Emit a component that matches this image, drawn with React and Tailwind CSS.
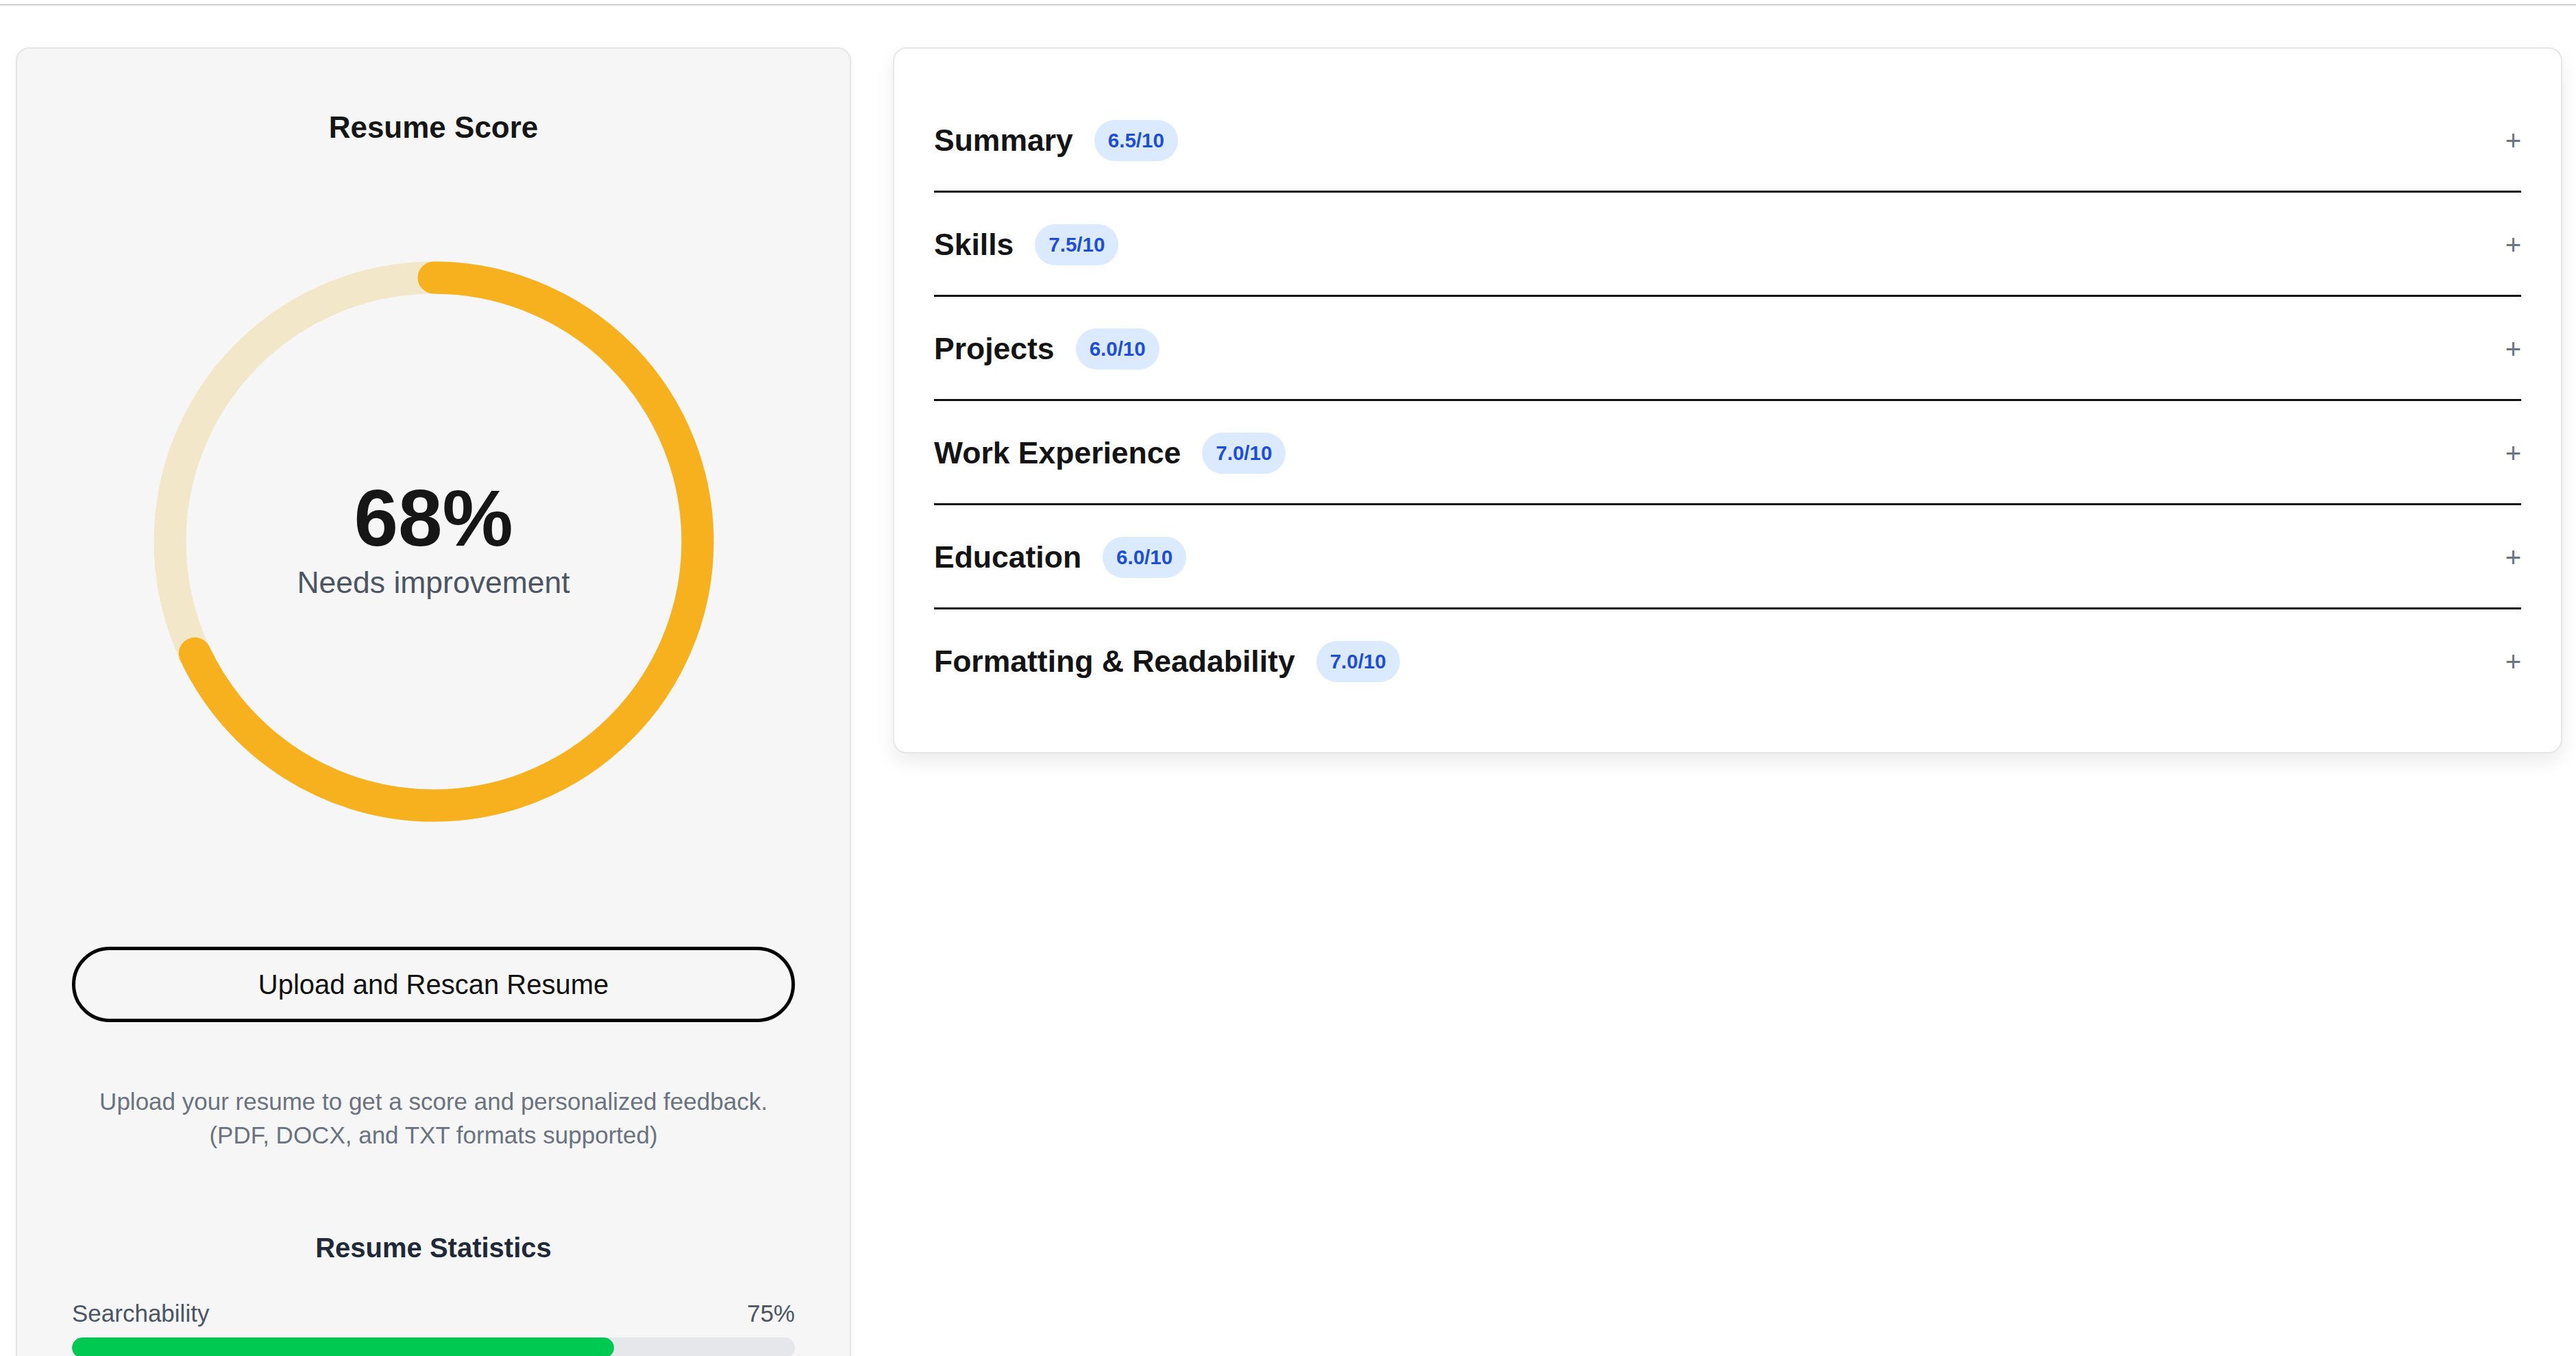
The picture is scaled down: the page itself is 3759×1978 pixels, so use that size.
import React from "react";

const sections = [
  { name: "Summary", score: "6.5/10" },
  { name: "Skills", score: "7.5/10" },
  { name: "Projects", score: "6.0/10" },
  { name: "Work Experience", score: "7.0/10" },
  { name: "Education", score: "6.0/10" },
  { name: "Formatting & Readability", score: "7.0/10" },
];

const ScoreRing = ({ value }) => {
  const r = 385;
  const circ = 2 * Math.PI * r;
  const filled = (value / 100) * circ;

  return (
    <div className="relative w-[818px] h-[818px] mx-auto mt-[162px]">
      <svg width="818" height="818" viewBox="0 0 818 818" className="-rotate-90">
        <circle cx="409" cy="409" r={r} fill="none" stroke="#f3e7c9" strokeWidth="47" />
        <circle
          cx="409"
          cy="409"
          r={r}
          fill="none"
          stroke="#f7b11e"
          strokeWidth="47"
          strokeLinecap="round"
          strokeDasharray={`${filled} ${circ}`}
        />
      </svg>
      {/* label sits over the ring */}
      <div className="absolute inset-0 flex flex-col items-center justify-center">
        <span className="text-[116px] leading-none font-bold text-[#161616]">{value}%</span>
        <span className="mt-[3px] text-[44.5px] leading-[66px] text-[#4b5563]">Needs improvement</span>
      </div>
    </div>
  );
};

const App = () => {
  return (
    <div
      className="h-[1978px] overflow-hidden bg-white"
      style={{ fontFamily: '"Liberation Sans", Arial, sans-serif' }}
    >
      <div className="h-[8px] border-b-2 border-[#cfcfcf]" />

      <div className="grid grid-cols-[1219px_1fr] gap-[61px] pl-[23px] pr-[20px] pt-[61px] items-start">
        {/* Left: score card */}
        <div className="bg-[#f6f6f6] border-2 border-[#e6e6e6] rounded-[20px] shadow-[0_2px_10px_rgba(0,0,0,0.05)] px-[80px] pt-[82px] pb-[80px] min-h-[2000px]">
          <h2 className="text-center text-[44px] leading-[66px] font-bold text-[#161616]">Resume Score</h2>

          <ScoreRing value={68} />

          <button className="mt-[182px] w-full h-[110px] flex items-center justify-center rounded-full border-[5px] border-black text-[40px] text-[#111]">
            Upload and Rescan Resume
          </button>

          <p className="mt-[91px] text-center text-[35px] leading-[49px] text-[#6b7280]">
            Upload your resume to get a score and personalized feedback.
            <br />
            (PDF, DOCX, and TXT formats supported)
          </p>

          <h3 className="mt-[110px] text-center text-[40px] leading-[60px] font-bold text-[#1f2937]">
            Resume Statistics
          </h3>

          <div className="mt-[41px] flex justify-between text-[35px] leading-[49px] text-[#4b5563]">
            <span>Searchability</span>
            <span>75%</span>
          </div>
          <div className="mt-[11px] h-[30px] rounded-full bg-[#e5e7eb] overflow-hidden">
            <div className="h-full rounded-full bg-[#00c951]" style={{ width: "75%" }} />
          </div>
        </div>

        {/* Right: section accordion */}
        <div className="bg-white border-2 border-[#e5e7eb] rounded-[20px] shadow-[0_12px_28px_rgba(0,0,0,0.08)] p-[58px]">
          {sections.map((s, i) => (
            <div
              key={s.name}
              className={`flex items-center justify-between pt-[46px] ${
                i < sections.length - 1 ? "pb-[43px] border-b-[3px] border-[#111]" : "pb-[44px]"
              }`}
            >
              <div className="flex items-center gap-[31px]">
                <span className="text-[44.5px] leading-[60px] font-bold text-[#141414]">{s.name}</span>
                <span className="h-[60px] px-[20px] flex items-center rounded-full bg-[#dbeafe] text-[29.5px] font-bold text-[#1d4ed8]">
                  {s.score}
                </span>
              </div>
              <span className="text-[40px] leading-none text-[#6b7280]">+</span>
            </div>
          ))}
        </div>
      </div>
    </div>
  );
};

export default App;
